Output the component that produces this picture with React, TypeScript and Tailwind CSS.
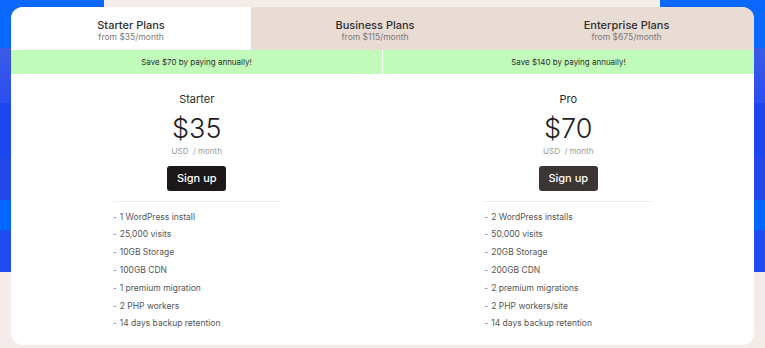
import React from 'react'

type Plan = {
  name: string
  price: string
  save: string
  dark: string
  features: string[]
}

const plans: Plan[] = [
  {
    name: 'Starter',
    price: '$35',
    save: 'Save $70 by paying annually!',
    dark: 'bg-[#1c1718]',
    features: [
      '1 WordPress install',
      '25,000 visits',
      '10GB Storage',
      '100GB CDN',
      '1 premium migration',
      '2 PHP workers',
      '14 days backup retention',
    ],
  },
  {
    name: 'Pro',
    price: '$70',
    save: 'Save $140 by paying annually!',
    dark: 'bg-[#3b3533]',
    features: [
      '2 WordPress installs',
      '50,000 visits',
      '20GB Storage',
      '200GB CDN',
      '2 premium migrations',
      '2 PHP workers/site',
      '14 days backup retention',
    ],
  },
]

export default function App() {
  return (
    <div
      className="relative w-[765px] h-[348px] overflow-hidden bg-[#f3ece9]"
      style={{ fontFamily: 'Inter, "Noto Sans", sans-serif' }}
    >
      {/* decorative blue backdrop */}
      <div className="absolute left-0 top-0 w-full h-[272px] bg-[linear-gradient(to_bottom,#0a68ff_0px,#0a68ff_48px,#3a5ae6_48px,#2a4ef0_103px,#1c46ee_103px,#1c46ee_157px,#2248ea_157px,#2248ea_200px,#0066ff_200px,#0066ff_230px,#1e4cf0_230px,#1e4cf0_272px)]" />
      <div className="absolute left-[104px] top-0 w-[556px] h-[8px] bg-[#f3ece9]" />

      <div className="relative mx-[11px] mt-[7px] h-[338px] rounded-[12px] bg-white overflow-hidden flex flex-col">
        <div className="flex h-[43px] bg-[#e8dcd4]">
          <Tab className="w-[240px] bg-white" title="Starter Plans" sub="from $35/month" />
          <Tab className="w-[248px]" title="Business Plans" sub="from $115/month" />
          <Tab className="flex-1" title="Enterprise Plans" sub="from $675/month" />
        </div>

        <div className="flex h-[24px]">
          {plans.map((p, i) => (
            <div
              key={p.name}
              className={`flex-1 flex items-center justify-center bg-[#c1fbb9] text-[8px] text-[#2c2c2c] ${i === 0 ? 'border-r border-white' : ''}`}
            >
              {p.save}
            </div>
          ))}
        </div>

        <div className="flex">
          {plans.map((p) => (
            <div key={p.name} className="flex-1 flex flex-col items-center pt-[18px]">
              <div className="text-[11px] leading-[14px] text-[#2a2a2a]">{p.name}</div>
              <div className="mt-[7px] text-[27px] leading-[32px] font-light text-[#1e1e1e]">{p.price}</div>
              <div className="mt-[1px] text-[8px] leading-[10px] text-[#9a9a9a]">USD&nbsp; / month</div>
              <button
                className={`mt-[10px] h-[25px] w-[59px] rounded-[3px] ${p.dark} text-white text-[11px] font-medium`}
              >
                Sign up
              </button>
              <div className="mt-[10px] h-px w-[168px] bg-[#f3ece9]" />
              <ul className="mt-[6px] w-[168px]">
                {p.features.map((f) => (
                  <li key={f} className="flex items-center h-[17.8px] text-[8.5px] text-[#555]">
                    <span className="w-[7px] text-[#6b7fd9]">-</span>
                    {f}
                  </li>
                ))}
              </ul>
            </div>
          ))}
        </div>
      </div>
    </div>
  )
}

function Tab({ className, title, sub }: { className: string; title: string; sub: string }) {
  return (
    <div className={`flex flex-col items-center justify-center pt-[4px] ${className}`}>
      <div className="text-[11px] leading-[13px] font-medium text-[#2f2f2f]">{title}</div>
      <div className="text-[8.5px] leading-[10px] text-[#7a7a7a]">{sub}</div>
    </div>
  )
}
